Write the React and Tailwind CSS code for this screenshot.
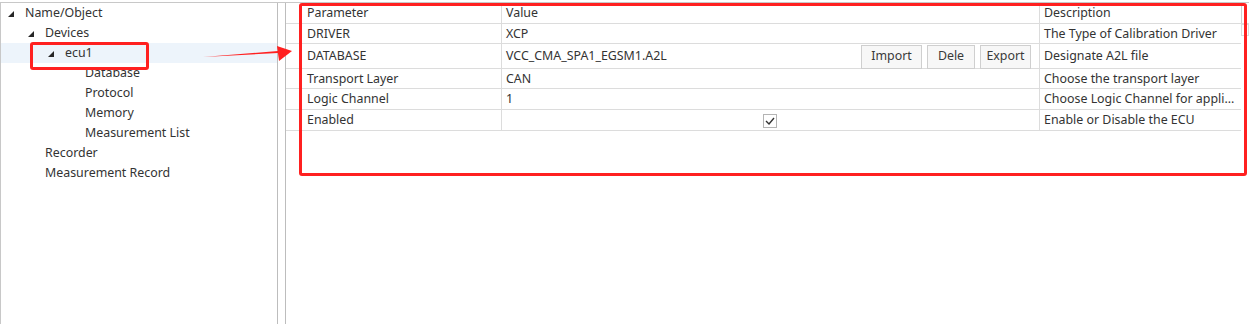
import React from "react";

const Tri = () => (
  <svg width="6" height="6" viewBox="0 0 6 6" className="shrink-0">
    <polygon points="6,0 6,6 0,6" fill="#262626" />
  </svg>
);

const treeRows = [
  { label: "Name/Object", level: 0, tri: true },
  { label: "Devices", level: 1, tri: true },
  { label: "ecu1", level: 2, tri: true, selected: true },
  { label: "Database", level: 3 },
  { label: "Protocol", level: 3 },
  { label: "Memory", level: 3 },
  { label: "Measurement List", level: 3 },
  { label: "Recorder", level: 1 },
  { label: "Measurement Record", level: 1 },
];

const triIndents = ["pl-[7px]", "pl-[27px]", "pl-[47px]"];
const textIndents = ["pl-[24px]", "pl-[44px]", "pl-[64px]", "pl-[84px]"];

function TreeRow({ r }) {
  return (
    <div
      className={`h-[20px] pt-[1px] flex items-center ${r.tri ? triIndents[r.level] : textIndents[r.level]} ${
        r.selected ? "bg-[#edf4fb]" : ""
      }`}
    >
      {r.tri && <Tri />}
      <span className={r.tri ? "ml-[11px]" : ""}>{r.label}</span>
    </div>
  );
}

const Btn = ({ children, w }) => (
  <div
    className={`${w} h-[24px] border border-[#cfcfcf] bg-[#f7f7f7] flex items-center justify-center text-[#3a3a3a]`}
  >
    {children}
  </div>
);

function Row({ h, param, value, desc, children }) {
  return (
    <div className={`flex ${h} border-b border-[#dcdcdc]`}>
      <div className="w-[17px] shrink-0 bg-white" />
      <div className="w-[199px] shrink-0 border-r border-[#dcdcdc] pl-[4px] pt-[1px] flex items-center">
        {param}
      </div>
      <div className="w-[538px] shrink-0 border-r border-[#dcdcdc] pl-[4px] pt-[1px] flex items-center">
        {children ? children : value}
      </div>
      <div className="w-[201px] shrink-0 pl-[4px] pt-[1px] flex items-center whitespace-nowrap overflow-hidden">
        {desc}
      </div>
    </div>
  );
}

export default function App() {
  return (
    <div
      className="relative w-[1249px] h-[324px] bg-white overflow-hidden text-[12.4px] text-[#333]"
      style={{ fontFamily: '"Noto Sans", "Open Sans", sans-serif' }}
    >
      <div className="mt-[2px] h-[322px] border-t border-l border-[#c8c8c8] flex">
        {/* Left tree */}
        <div className="w-[277px] shrink-0 border-r border-[#bdbdbd] leading-none">
          {treeRows.map((r) => (
            <TreeRow key={r.label} r={r} />
          ))}
        </div>
        <div className="w-[7px] shrink-0" />
        {/* Right panel */}
        <div className="flex-1 border-l border-[#bdbdbd] leading-none">
          <div className="flex h-[21px] border-b border-[#dcdcdc]">
            <div className="w-[17px] shrink-0" />
            <div className="w-[199px] shrink-0 border-r border-[#dcdcdc] pl-[4px] pt-[1px] flex items-center">
              Parameter
            </div>
            <div className="w-[538px] shrink-0 border-r border-[#dcdcdc] pl-[4px] pt-[1px] flex items-center">
              Value
            </div>
            <div className="w-[202px] shrink-0 border-r border-[#cfcfcf] pl-[4px] pt-[1px] flex items-center">
              Description
            </div>
          </div>
          <div className="w-[955px]">
            <Row h="h-[20px]" param="DRIVER" value="XCP" desc="The Type of Calibration Driver" />
            <Row h="h-[25px]" param="DATABASE" desc="Designate A2L file">
              <div className="flex items-center w-full">
                <span className="flex-1">VCC_CMA_SPA1_EGSM1.A2L</span>
                <div className="flex gap-[5px] mr-[8px]">
                  <Btn w="w-[61px]">Import</Btn>
                  <Btn w="w-[48px]">Dele</Btn>
                  <Btn w="w-[51px]">Export</Btn>
                </div>
              </div>
            </Row>
            <Row h="h-[20px]" param="Transport Layer" value="CAN" desc="Choose the transport layer" />
            <Row h="h-[21px]" param="Logic Channel" value="1" desc="Choose Logic Channel for appli..." />
            <Row h="h-[21px]" param="Enabled" desc="Enable or Disable the ECU">
              <div className="w-full flex justify-center pr-[6px]">
                <div className="w-[14px] h-[14px] border border-[#b4b4b4] bg-white flex items-center justify-center">
                  <svg width="10" height="8" viewBox="0 0 10 8">
                    <path d="M1 4 L4 7 L9 1" stroke="#333" strokeWidth="1.4" fill="none" />
                  </svg>
                </div>
              </div>
            </Row>
          </div>
        </div>
      </div>

      {/* scrollbar fragment */}
      <div className="absolute left-[1241px] top-[24px] w-[8px] h-[12px] border border-[#dcdcdc] bg-white" />

      {/* Annotations */}
      <div className="absolute left-[30px] top-[42px] w-[119px] h-[28px] border-[3px] border-[#ff2020] rounded-[3px]" />
      <div className="absolute left-[299px] top-[3px] w-[948px] h-[173px] border-[3px] border-[#ff2020] rounded-[3px]" />
      <svg className="absolute left-[200px] top-[40px]" width="100" height="24" viewBox="0 0 100 24">
        <polygon points="3,17 78,11 78,13" fill="#ff2020" />
        <polygon points="77,6 92,11 79,21" fill="#ff2020" />
      </svg>
    </div>
  );
}
